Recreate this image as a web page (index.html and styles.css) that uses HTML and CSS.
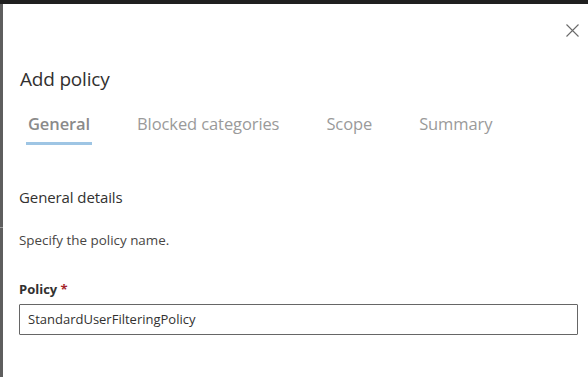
FILE: index.html
```html
<!DOCTYPE html>
<html>
<head>
<meta charset="utf-8">
<link rel="stylesheet" href="styles.css">
</head>
<body>
<div class="frame">
  <div class="topbar"></div>
  <div class="main">
    <div class="strip"><div class="strip-line"></div></div>
    <div class="panel">
      <div class="close-row">
        <button class="close" aria-label="Close">
          <svg width="13" height="13" viewBox="0 0 13 13"><path d="M0.5 0.5L12.5 12.5M12.5 0.5L0.5 12.5" stroke="#6a6a6a" stroke-width="1.1" fill="none"/></svg>
        </button>
      </div>
      <h1 class="title">Add policy</h1>
      <div class="tabs">
        <div class="tab active">General</div>
        <div class="tab">Blocked categories</div>
        <div class="tab">Scope</div>
        <div class="tab">Summary</div>
      </div>
      <h2 class="section">General details</h2>
      <p class="desc">Specify the policy name.</p>
      <label class="label">Policy <span class="req">*</span></label>
      <div class="input">StandardUserFilteringPolicy</div>
    </div>
  </div>
</div>
</body>
</html>
```
FILE: styles.css
```css
html, body {
  margin: 0;
  padding: 0;
  background: #ffffff;
}
.frame {
  width: 588px;
  height: 377px;
  display: flex;
  flex-direction: column;
  overflow: hidden;
  font-family: "Open Sans", "Noto Sans", sans-serif;
}
.topbar {
  height: 4px;
  background: #1f1f1f;
  flex: none;
}
.main {
  flex: 1;
  display: flex;
}
.strip {
  width: 3px;
  background: #5e5e5e;
  flex: none;
  display: flex;
  flex-direction: column;
}
.strip-line {
  margin-top: 223px;
  height: 1px;
  background: #9a9a9a;
}
.panel {
  flex: 1;
  padding: 0 10px 0 16px;
  display: flex;
  flex-direction: column;
}
.close-row {
  display: flex;
  justify-content: flex-end;
  padding-top: 20px;
  height: 20px;
}
.close {
  border: 0;
  background: none;
  padding: 0;
  margin-right: -1px;
  width: 13px;
  height: 13px;
  line-height: 0;
}
.title {
  margin: 22px 0 0 1px;
  font-size: 19px;
  font-weight: 400;
  color: #323130;
  line-height: 26px;
  letter-spacing: -0.2px;
}
.tabs {
  display: flex;
  gap: 43px;
  margin: 21px 0 0 7px;
}
.tab {
  font-size: 16.5px;
  color: #9a9a9a;
  padding: 0 2px 7px;
  line-height: 22px;
  border-bottom: 3px solid transparent;
  letter-spacing: -0.1px;
}
.tab.active {
  color: #8a8a8a;
  font-weight: 600;
  border-bottom-color: #9ec5e4;
}
.section {
  margin: 41px 0 0 0;
  font-size: 15px;
  font-weight: 400;
  color: #323130;
  line-height: 22px;
  letter-spacing: -0.1px;
}
.desc {
  margin: 23px 0 0 0;
  font-size: 13.4px;
  color: #484644;
  line-height: 18px;
}
.label {
  margin-top: 31px;
  font-size: 13px;
  font-weight: 700;
  color: #323130;
  line-height: 18px;
}
.req {
  color: #a4262c;
}
.input {
  margin-top: 6px;
  height: 29px;
  border: 1px solid #666666;
  border-radius: 1px;
  box-sizing: content-box;
  padding: 0 8px;
  font-size: 13px;
  line-height: 29px;
  color: #323130;
  width: 541px;
}
```
